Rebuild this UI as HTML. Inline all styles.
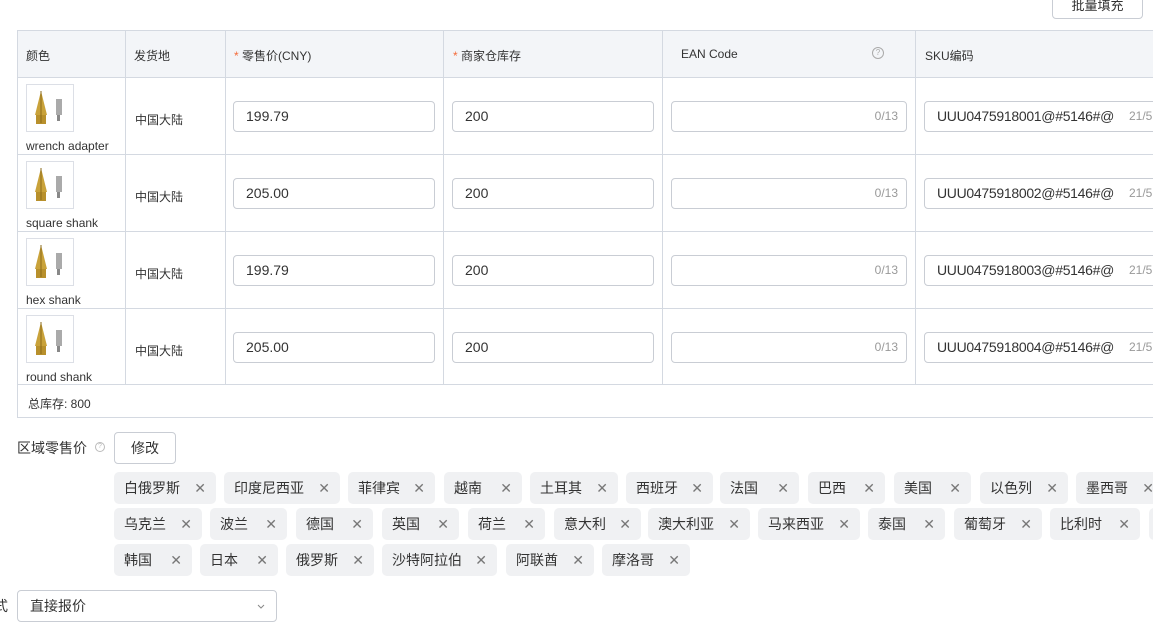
<!DOCTYPE html>
<html><head><meta charset="utf-8"><style>
*{box-sizing:border-box;margin:0;padding:0}
body{width:1153px;height:631px;overflow:hidden;background:#fff;font-family:"Liberation Sans","Noto Sans CJK SC",sans-serif;color:#333;font-size:12px;position:relative}
.a{position:absolute}
.hl{position:absolute;height:1px;background:#d4d9e1}
.vl{position:absolute;width:1px;background:#d4d9e1}
.inp{position:absolute;height:31px;border:1px solid #c9cdd4;border-radius:4px;background:#fff;font-size:14px;line-height:29px;padding-left:12px;color:#333}
.sku{letter-spacing:-0.3px}
.cnt{position:absolute;right:8px;top:0;font-size:12px;color:#999}
.th{position:absolute;top:47px;font-size:12px;color:#333}
.img{position:absolute;left:26px;width:48px;height:48px;border:1px solid #dcdfe6;background:#fff}
.lbl{position:absolute;left:26px;font-size:12px;color:#333}
.loc{position:absolute;left:135px;font-size:12px}
.tag{position:absolute;height:32px;background:#f0f1f3;border-radius:5px;font-size:14px;line-height:32px;padding-left:10px;color:#333;white-space:nowrap}
.tag b{font-weight:normal;position:absolute;right:10px;top:0;color:#777;font-size:14px}
</style></head><body>
<div class="a" style="left:1052px;top:-6px;width:91px;height:25px;border:1px solid #c9cdd4;border-radius:4px;text-align:center;font-size:13px;line-height:22px">批量填充</div>

<div class="a" style="left:17px;top:30px;width:1140px;height:47px;background:#f3f5f8"></div>
<div class="hl" style="left:17px;top:30px;width:1140px"></div>
<div class="hl" style="left:17px;top:77px;width:1140px"></div>
<div class="hl" style="left:17px;top:154px;width:1140px"></div>
<div class="hl" style="left:17px;top:231px;width:1140px"></div>
<div class="hl" style="left:17px;top:308px;width:1140px"></div>
<div class="hl" style="left:17px;top:384px;width:1140px"></div>
<div class="hl" style="left:17px;top:417px;width:1140px"></div>
<div class="vl" style="left:17px;top:30px;height:388px"></div>
<div class="vl" style="left:125px;top:30px;height:355px"></div>
<div class="vl" style="left:225px;top:30px;height:355px"></div>
<div class="vl" style="left:443px;top:30px;height:355px"></div>
<div class="vl" style="left:662px;top:30px;height:355px"></div>
<div class="vl" style="left:915px;top:30px;height:355px"></div>

<div class="th" style="left:26px">颜色</div>
<div class="th" style="left:134px">发货地</div>
<div class="th" style="left:234px"><span style="color:#f56c3a">*</span> 零售价(CNY)</div>
<div class="th" style="left:453px"><span style="color:#f56c3a">*</span> 商家仓库存</div>
<div class="th" style="left:681px">EAN Code</div>
<div class="a" style="left:872px;top:47px;width:12px;height:12px;border:1px solid #aaa;border-radius:50%;font-size:8px;line-height:10px;text-align:center;color:#aaa">?</div>
<div class="th" style="left:925px">SKU编码</div>

<svg width="0" height="0" style="position:absolute"><defs>
<g id="pic"><polygon points="14,6 8,30 20,30" fill="#c9a23a"/><rect x="9" y="30" width="10" height="9" fill="#b8902c"/><line x1="14" y1="6" x2="14" y2="38" stroke="#8a6a1a" stroke-width="1"/><rect x="29" y="14" width="6" height="16" fill="#aaa"/><rect x="30" y="30" width="3" height="6" fill="#888"/></g></defs></svg>

<div class="img" style="top:84px"><svg width="46" height="46"><use href="#pic"/></svg></div>
<div class="lbl" style="top:139px">wrench adapter</div>
<div class="loc" style="top:111px">中国大陆</div>
<div class="inp" style="left:233px;top:101px;width:202px">199.79</div>
<div class="inp" style="left:452px;top:101px;width:202px">200</div>
<div class="inp" style="left:671px;top:101px;width:236px"><span class="cnt">0/13</span></div>
<div class="inp sku" style="left:924px;top:101px;width:240px">UUU0475918001@#5146#@<span style="position:absolute;left:204px;font-size:12px;color:#999;letter-spacing:0">21/5</span></div>

<div class="img" style="top:161px"><svg width="46" height="46"><use href="#pic"/></svg></div>
<div class="lbl" style="top:216px">square shank</div>
<div class="loc" style="top:188px">中国大陆</div>
<div class="inp" style="left:233px;top:178px;width:202px">205.00</div>
<div class="inp" style="left:452px;top:178px;width:202px">200</div>
<div class="inp" style="left:671px;top:178px;width:236px"><span class="cnt">0/13</span></div>
<div class="inp sku" style="left:924px;top:178px;width:240px">UUU0475918002@#5146#@<span style="position:absolute;left:204px;font-size:12px;color:#999;letter-spacing:0">21/5</span></div>

<div class="img" style="top:238px"><svg width="46" height="46"><use href="#pic"/></svg></div>
<div class="lbl" style="top:293px">hex shank</div>
<div class="loc" style="top:265px">中国大陆</div>
<div class="inp" style="left:233px;top:255px;width:202px">199.79</div>
<div class="inp" style="left:452px;top:255px;width:202px">200</div>
<div class="inp" style="left:671px;top:255px;width:236px"><span class="cnt">0/13</span></div>
<div class="inp sku" style="left:924px;top:255px;width:240px">UUU0475918003@#5146#@<span style="position:absolute;left:204px;font-size:12px;color:#999;letter-spacing:0">21/5</span></div>

<div class="img" style="top:315px"><svg width="46" height="46"><use href="#pic"/></svg></div>
<div class="lbl" style="top:370px">round shank</div>
<div class="loc" style="top:342px">中国大陆</div>
<div class="inp" style="left:233px;top:332px;width:202px">205.00</div>
<div class="inp" style="left:452px;top:332px;width:202px">200</div>
<div class="inp" style="left:671px;top:332px;width:236px"><span class="cnt">0/13</span></div>
<div class="inp sku" style="left:924px;top:332px;width:240px">UUU0475918004@#5146#@<span style="position:absolute;left:204px;font-size:12px;color:#999;letter-spacing:0">21/5</span></div>

<div class="a" style="left:28px;top:395px;font-size:12px">总库存: 800</div>

<div class="a" style="left:17px;top:438px;font-size:14px">区域零售价</div>
<div class="a" style="left:95px;top:442px;width:10px;height:10px;border:1px solid #bbb;border-radius:50%;font-size:7px;line-height:8px;text-align:center;color:#bbb">?</div>
<div class="a" style="left:114px;top:432px;width:62px;height:32px;border:1px solid #c9cdd4;border-radius:4px;text-align:center;line-height:30px;font-size:14px">修改</div>

<div class="tag" style="left:114px;top:472px;width:102px">白俄罗斯<b>✕</b></div>
<div class="tag" style="left:224px;top:472px;width:116px">印度尼西亚<b>✕</b></div>
<div class="tag" style="left:348px;top:472px;width:87px">菲律宾<b>✕</b></div>
<div class="tag" style="left:444px;top:472px;width:78px">越南<b>✕</b></div>
<div class="tag" style="left:530px;top:472px;width:88px">土耳其<b>✕</b></div>
<div class="tag" style="left:626px;top:472px;width:87px">西班牙<b>✕</b></div>
<div class="tag" style="left:720px;top:472px;width:79px">法国<b>✕</b></div>
<div class="tag" style="left:808px;top:472px;width:77px">巴西<b>✕</b></div>
<div class="tag" style="left:894px;top:472px;width:77px">美国<b>✕</b></div>
<div class="tag" style="left:980px;top:472px;width:88px">以色列<b>✕</b></div>
<div class="tag" style="left:1076px;top:472px;width:88px">墨西哥<b>✕</b></div>

<div class="tag" style="left:114px;top:508px;width:88px">乌克兰<b>✕</b></div>
<div class="tag" style="left:210px;top:508px;width:77px">波兰<b>✕</b></div>
<div class="tag" style="left:296px;top:508px;width:77px">德国<b>✕</b></div>
<div class="tag" style="left:382px;top:508px;width:77px">英国<b>✕</b></div>
<div class="tag" style="left:468px;top:508px;width:77px">荷兰<b>✕</b></div>
<div class="tag" style="left:554px;top:508px;width:87px">意大利<b>✕</b></div>
<div class="tag" style="left:648px;top:508px;width:102px">澳大利亚<b>✕</b></div>
<div class="tag" style="left:758px;top:508px;width:102px">马来西亚<b>✕</b></div>
<div class="tag" style="left:868px;top:508px;width:77px">泰国<b>✕</b></div>
<div class="tag" style="left:954px;top:508px;width:88px">葡萄牙<b>✕</b></div>
<div class="tag" style="left:1050px;top:508px;width:90px">比利时<b>✕</b></div>
<div class="tag" style="left:1149px;top:508px;width:20px"></div>

<div class="tag" style="left:114px;top:544px;width:78px">韩国<b>✕</b></div>
<div class="tag" style="left:200px;top:544px;width:78px">日本<b>✕</b></div>
<div class="tag" style="left:286px;top:544px;width:88px">俄罗斯<b>✕</b></div>
<div class="tag" style="left:382px;top:544px;width:115px">沙特阿拉伯<b>✕</b></div>
<div class="tag" style="left:506px;top:544px;width:88px">阿联酋<b>✕</b></div>
<div class="tag" style="left:602px;top:544px;width:88px">摩洛哥<b>✕</b></div>

<div class="a" style="left:-6px;top:596px;font-size:14px">式</div>
<div class="a" style="left:17px;top:590px;width:260px;height:32px;border:1px solid #c9cdd4;border-radius:4px;font-size:14px;line-height:30px;padding-left:12px">直接报价<svg style="position:absolute;right:11px;top:13px" width="8" height="5"><path d="M1 1 L4 4 L7 1" stroke="#888" fill="none"/></svg></div>
</body></html>
